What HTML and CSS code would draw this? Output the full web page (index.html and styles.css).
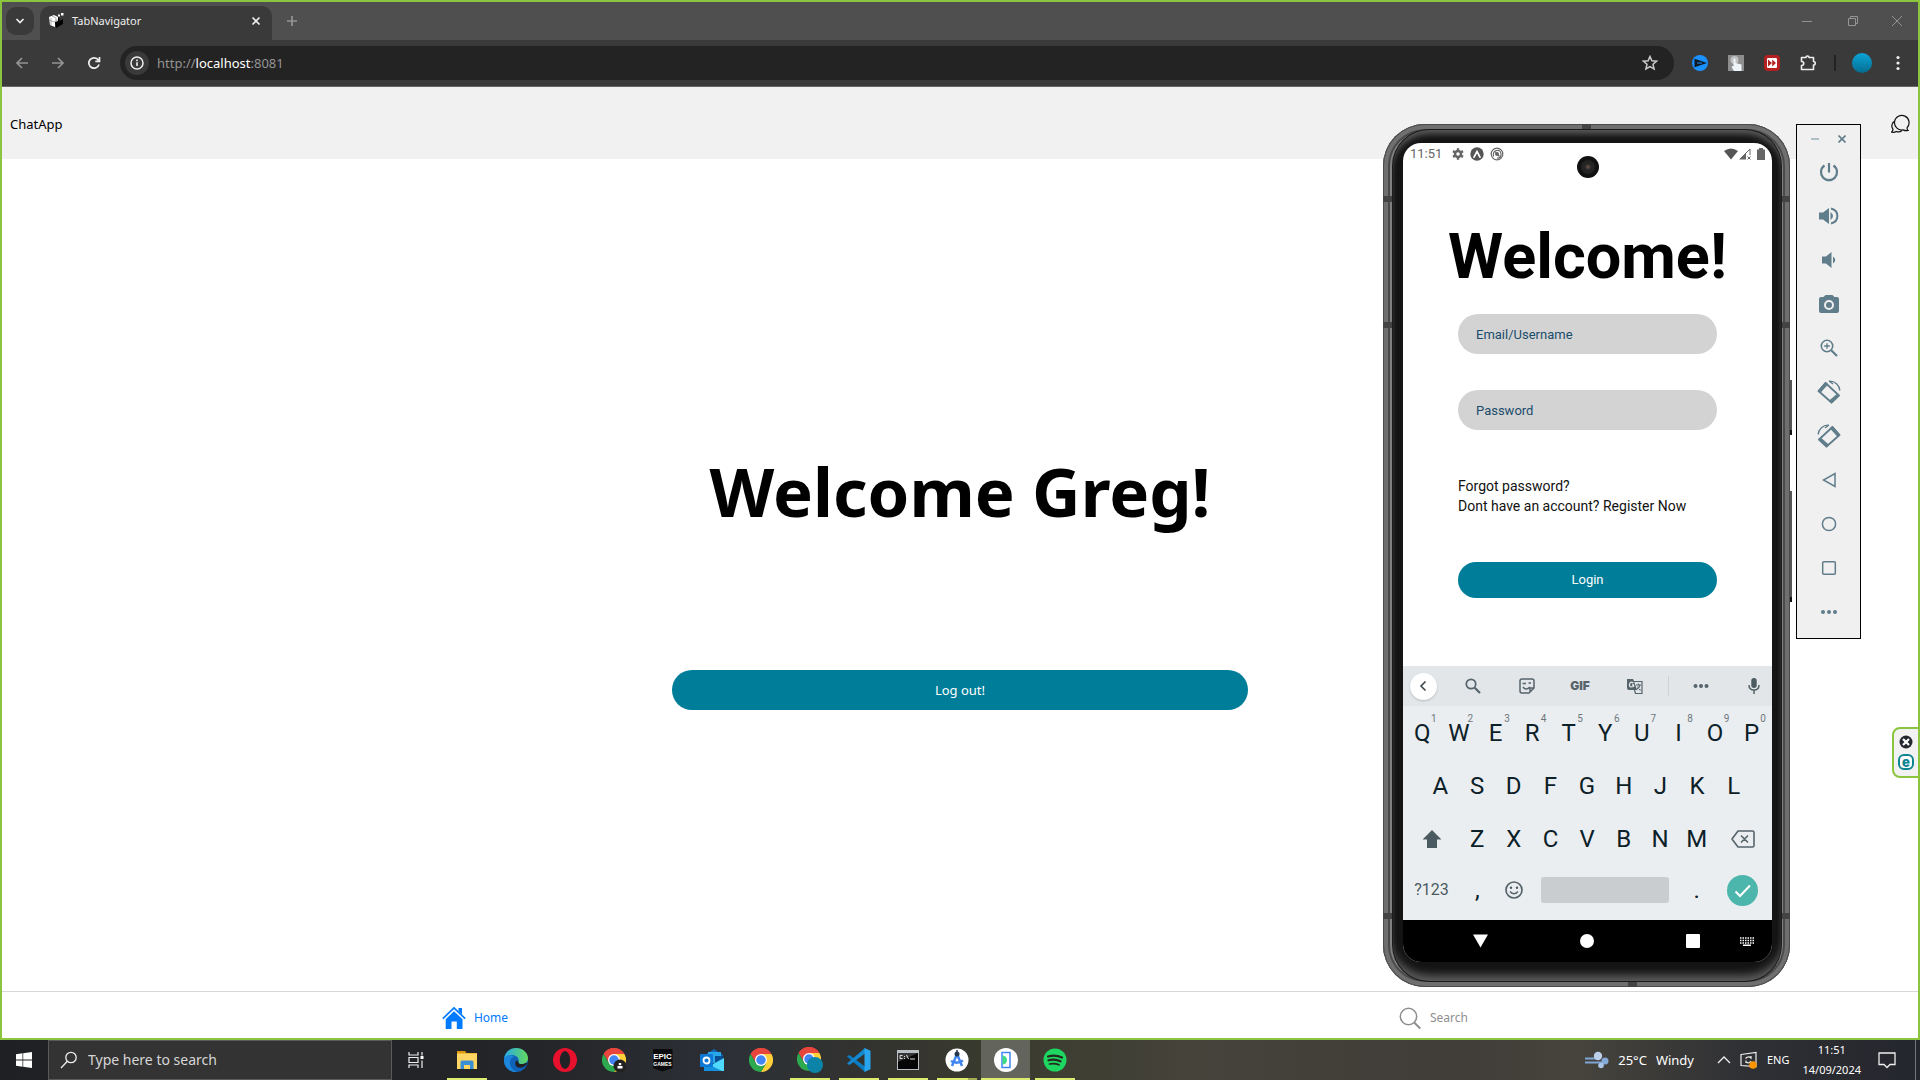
FILE: index.html
```html
<!DOCTYPE html>
<html lang="en">
<head>
<meta charset="utf-8">
<title>TabNavigator</title>
<link rel="stylesheet" href="styles.css">
</head>
<body>
<svg class="defs" aria-hidden="true">
  <symbol id="chrome" viewBox="0 0 48 48">
    <path fill="#e8453c" d="M24 24 3.200 12A24 24 0 0 1 44.800 12z"/>
    <path fill="#e8453c" d="M3.200 12A24 24 0 0 1 44.800 12H24L14 30z"/>
    <path fill="#fdd039" d="M44.800 12A24 24 0 0 1 24 48L34.400 30 24 12z"/>
    <path fill="#2da94f" d="M3.200 12A24 24 0 0 0 24 48L34.400 30H13.600z"/>
    <circle cx="24" cy="24" r="12" fill="#fff"/><circle cx="24" cy="24" r="9.500" fill="#4285f4"/>
  </symbol>
  <symbol id="rotate" viewBox="0 0 24 24">
    <path fill="none" stroke="currentColor" stroke-width="1.800" stroke-linejoin="round" d="M8.500 3 22 15.500 14.500 22.500 1.500 11z"/>
    <path fill="currentColor" d="m8.500 1.800 2.800 2.400L3.500 12.800.5 11zM20 13.700l3 1.800-8.500 8-2.800-2.500z"/>
    <path fill="none" stroke="currentColor" stroke-width="1.400" d="M12 1.200c6-.5 10.500 4 10.800 9.300M12 1l4 3"/>
  </symbol>
</svg>

<div class="browser">
  <header class="tabstrip">
    <button class="tab-search" aria-label="Search tabs"><svg width="12" height="12" viewBox="0 0 12 12"><path class="line w2" d="m2.500 4 3.500 3.500L9.500 4"/></svg></button>
    <div class="tab">
      <svg width="16" height="16" viewBox="0 0 16 16"><path fill="#fff" d="M1 4l5-2 4 2v5l-3 1v4l-5-2z"/><path fill="#000" d="m7 9 3-1V4l1.500 1.500V8L15 6v5l-7 4z"/><path fill="#fff" d="M10 1.500h2v2h-2zM13 0h2.500v2.500H13z"/><path stroke="#888" stroke-width=".7" fill="none" d="m1 7 5 2 4-2M4 3l4 2v4M3 5v7"/></svg>
      <span class="tab-title">TabNavigator</span>
      <button class="bare" aria-label="Close tab"><svg width="10" height="10" viewBox="0 0 10 10"><path class="line w2" d="m1.500 1.500 7 7m0-7-7 7"/></svg></button>
    </div>
    <button class="bare new-tab" aria-label="New tab"><svg width="12" height="12" viewBox="0 0 12 12"><path class="line dim w2" d="M6 1v10M1 6h10"/></svg></button>
    <div class="window-controls">
      <button class="bare" aria-label="Minimize"><svg width="12" height="12" viewBox="0 0 12 12"><path class="line dim" d="M1 6.500h10"/></svg></button>
      <button class="bare" aria-label="Restore"><svg width="12" height="12" viewBox="0 0 12 12"><path class="line dim" d="M1.500 3.500h7v7h-7zM3.500 3.500v-2h7v7h-2"/></svg></button>
      <button class="bare" aria-label="Close"><svg width="12" height="12" viewBox="0 0 12 12"><path class="line dim" d="m1 1 10 10m0-10L1 11"/></svg></button>
    </div>
  </header>

  <nav class="toolbar">
    <button class="bare tool" aria-label="Back"><svg width="14" height="14" viewBox="0 0 14 14"><path class="line dim w2" d="M13 7H2m5-5L2 7l5 5"/></svg></button>
    <button class="bare tool" aria-label="Forward"><svg width="14" height="14" viewBox="0 0 14 14"><path class="line dim w2" d="M1 7h11M7 2l5 5-5 5"/></svg></button>
    <button class="bare tool" aria-label="Reload"><svg width="14" height="14" viewBox="0 0 14 14"><path class="line w2" d="M12 8.500A5.200 5.200 0 1 1 10.800 3.400L12.300 5M12.500 1v4.300H8.300"/></svg></button>
    <div class="address">
      <button class="site-info" aria-label="Site information"><svg width="14" height="14" viewBox="0 0 14 14"><circle class="line" cx="7" cy="7" r="6" stroke-width="1.500"/><path stroke="#eee" stroke-width="1.600" d="M7 6.300V10M7 3.600v1.600"/></svg></button>
      <div class="url" role="textbox" aria-label="Address">http://<span class="host">localhost</span>:8081</div>
      <button class="bare" aria-label="Bookmark"><svg width="16" height="16" viewBox="0 0 16 16"><path class="line soft" stroke-width="1.500" d="m8 1.500 1.900 4.300 4.700.4-3.600 3.100 1.100 4.600L8 11.500l-4.100 2.400L5 9.300 1.400 6.200l4.700-.4z"/></svg></button>
    </div>
    <button class="bare tool" aria-label="Video extension"><svg width="16" height="16" viewBox="0 0 16 16"><circle cx="8" cy="8" r="8" fill="#1a91ff"/><path fill="#101820" d="m2.500 3.800 12.500 4.200-12.500 4.200z"/><path stroke="#1a91ff" d="M5 8h5"/></svg></button>
    <button class="bare tool" aria-label="Click extension"><svg width="16" height="16" viewBox="0 0 16 16"><path fill="#8e8e8e" d="M0 0h16v16H0z"/><circle cx="6.500" cy="5" r="4" fill="#c2c2c2"/><path fill="#eef6fb" d="M5.500 4q1-1 2 0v4l6 1.500V16H6l-2.500-4 1-1 1 .5z"/></svg></button>
    <button class="bare tool" aria-label="Speed extension"><svg width="16" height="16" viewBox="0 0 16 16"><rect width="16" height="16" rx="4" fill="#b3201f"/><rect x="3" y="3" width="10" height="10" rx="1" fill="#fff"/><path fill="#b3201f" d="m4 4.500 4 3.500-4 3.500zm4.200 0L12 8l-3.800 3.500z"/></svg></button>
    <button class="bare tool" aria-label="Extensions"><svg width="16" height="16" viewBox="0 0 16 16"><path class="line" stroke-width="1.600" stroke-linejoin="round" d="M1.500 2.500H6a1.500 1.500 0 0 1 3 0h4.500v4a1.500 1.500 0 0 1 0 3.500v4.500h-12v-4c3 0 3-4 0-4z"/></svg></button>
    <span class="tool-divider"></span>
    <button class="avatar" aria-label="Profile"></button>
    <button class="bare menu" aria-label="Menu"><svg width="4" height="16" viewBox="0 0 4 16" fill="#eee"><circle cx="2" cy="2.500" r="1.600"/><circle cx="2" cy="8" r="1.600"/><circle cx="2" cy="13.500" r="1.600"/></svg></button>
  </nav>

  <div class="app-header">
    <span>ChatApp</span>
    <button class="bare" aria-label="Chats"><svg width="20" height="20" viewBox="0 0 20 20"><path fill="none" stroke="#111" stroke-width="1.200" d="M17 13.800A7.300 7.300 0 1 0 13 15.900q2.500 1.200 5 .6-1-.9-1-2.700zM3.900 7.500c-2.300 2.300-2.600 5.300-.9 7.800 0 1.500-1.300 2.400-1.300 2.900 2 .3 3.500 0 4.500-.7 2 .8 4 .6 5.800-1"/></svg></button>
  </div>

  <main class="home">
    <h1>Welcome Greg!</h1>
    <button class="logout">Log out!</button>
  </main>

  <nav class="app-tabs">
    <a class="app-tab active" href="#home"><svg width="24" height="24" viewBox="0 0 24 24"><path fill="currentColor" d="m12 5.200 8.500 8V23H14.800v-7.500H9.500V23H3.700v-9.800z"/><path fill="none" stroke="currentColor" stroke-width="1.700" d="M.8 12.700 12 2l11.200 10.700"/><path fill="currentColor" d="M16.500 2H20v6.500l-3.500-3.400z"/></svg>Home</a>
    <a class="app-tab" href="#search"><svg width="24" height="24" viewBox="0 0 24 24"><circle cx="10.500" cy="10.500" r="8.200" fill="none" stroke="currentColor" stroke-width="1.500"/><path stroke="currentColor" stroke-width="2" d="m16.200 16.500 6 6"/></svg>Search</a>
  </nav>
</div>

<footer class="taskbar">
  <button class="bare start" aria-label="Start"><svg width="16" height="16" viewBox="0 0 16 16" fill="#fff"><path d="M0 2.200 6.500 1.300v6.300H0zM7.200 1.200 16 0v7.600H7.200zM0 8.400h6.500v6.300L0 13.800zM7.200 8.400H16V16l-8.800-1.200z"/></svg></button>
  <label class="task-search">
    <svg width="18" height="18" viewBox="0 0 18 18"><circle class="line" cx="11" cy="6.500" r="5.200" stroke-width="1.300"/><path class="line" stroke-width="1.300" d="M7.300 10.300 1 17"/></svg>
    <input type="text" placeholder="Type here to search">
  </label>
  <button class="bare start" aria-label="Task view"><svg width="16" height="16" viewBox="0 0 16 16"><path class="line" d="M1 0v3h9V0M1 16v-3h9v3M1 5.500h9v5H1zM14 0v3.500M14 8.500V16" stroke-width="1.200"/><path fill="#fff" d="M12.500 4h3v3h-3z"/></svg></button>
  <div class="apps">
    <button class="app running" aria-label="File Explorer"><svg width="24" height="24" viewBox="0 0 24 24"><path fill="#e09a10" d="M2 3h8l1.500 2H22v6H2z"/><path fill="#ffd664" d="M2 5.500h20V21H2z"/><path fill="#3b8fd4" d="M5.500 21v-7q0-1.500 1.500-1.500h10q1.500 0 1.500 1.500v7h-3.500v-4h-6v4z"/></svg></button>
    <button class="app" aria-label="Edge"><svg width="24" height="24" viewBox="0 0 24 24"><defs><linearGradient id="eg"><stop stop-color="#2aa8e8"/><stop offset="1" stop-color="#62d95c"/></linearGradient></defs><circle cx="12" cy="12" r="12" fill="#0f62b8"/><path fill="url(#eg)" d="M0 11C1 4 6 0 12 0c7 0 12 5 12 10 0 4-3 6-6 6s-4-1-3.500-2.500C15.500 10 12 7 8 7 4 7 1 9 0 11z"/><path fill="#1b86dc" d="M0 11c2-4 7-5 10-2.500-3 1-4.500 4-4 7.500.6 4 4 7 7.500 8C6 25-1 19 0 11z"/><path fill="#1f2125" d="M14.500 13.500c-1 2 2 3.500 6 2 2-.7 3-1 2.500 0-2 4-6 4.500-8.500 4-3.500-.7-4-5-2-7z"/></svg></button>
    <button class="app" aria-label="Opera"><svg width="24" height="24" viewBox="0 0 24 24"><circle cx="12" cy="12" r="12" fill="#e8112d"/><ellipse cx="12" cy="12" rx="5.200" ry="9" fill="#212226"/></svg></button>
    <button class="app" aria-label="Chrome guest"><svg width="24" height="24" viewBox="0 0 24 24"><use href="#chrome"/><circle cx="18" cy="18" r="6.500" fill="#222"/><path fill="#fff" d="M16.800 15h2.400v2.200h-2.400zM15.500 18h5v2.500h-5z"/></svg></button>
    <button class="app" aria-label="Epic Games"><span class="epic"><b>EPIC</b><i>GAMES</i></span></button>
    <button class="app" aria-label="Outlook"><svg width="24" height="24" viewBox="0 0 24 24"><path fill="#1066b5" d="M5 7 14 1l9 6v8H5z"/><path fill="#28a8ea" d="M8 4h13v11H8z"/><path fill="#0a4f94" d="M15 8h8v5l-8 4z"/><path fill="#50d9ff" d="M24 10v13H5l8-7z"/><path fill="#1490df" d="m4 14 18 9H4z"/><rect y="6" width="13" height="13" rx="1" fill="#0f78d4"/><circle cx="6.500" cy="12.500" r="3" fill="none" stroke="#fff" stroke-width="1.800"/></svg></button>
    <button class="app" aria-label="Chrome"><svg width="24" height="24"><use href="#chrome"/></svg></button>
    <button class="app running" aria-label="Chrome profile"><svg width="26" height="26" viewBox="0 0 26 26"><use href="#chrome" width="24" height="24"/><circle cx="18" cy="18" r="8" fill="#0b84a8"/></svg></button>
    <button class="app running" aria-label="Visual Studio Code"><svg width="24" height="24" viewBox="0 0 24 24"><path fill="#0b7cc4" d="M0 8.500 2.500 7 18 18.500V24z"/><path fill="#1489d0" d="M0 15.500 2.500 17 18 5.500V0z"/><path fill="#29a5ee" d="m17.500 0 6 2.800v18.400l-6 2.800z"/></svg></button>
    <button class="app running" aria-label="Command Prompt"><svg width="24" height="24" viewBox="0 0 24 24"><path fill="#b9bec4" d="M1 2h22v20H1z"/><path fill="#050505" d="M2 5h20v16H2z"/><path fill="#fff" opacity=".2" d="M2 5h20L2 14z"/><path stroke="#ddd" fill="none" d="M6.500 7.500H4v3h2.500M8.500 8v1m0 1v1M10.500 7l2 4M14 11h5"/></svg></button>
    <button class="app running multiple" aria-label="Android Studio"><svg width="24" height="24" viewBox="0 0 24 24"><circle cx="12" cy="12" r="11.500" fill="#fff"/><path fill="none" stroke="#3f86f0" stroke-width="2.500" d="m12 6-5 12M12 6l5 12M6 13q6 3.500 12-.5"/><circle cx="12" cy="6" r="2.500" fill="#26384e"/><path stroke="#26384e" stroke-width="1.500" d="M12 2v3"/></svg></button>
    <button class="app running current" aria-label="Android Emulator"><svg width="24" height="24" viewBox="0 0 24 24"><circle cx="12" cy="12" r="12" fill="#fff"/><path fill="none" stroke="#4285f4" stroke-width="1.500" d="M8 4.500h8v15H8z"/><path fill="#3ddc84" d="M8.500 7.500a4.500 4.500 0 0 1 0 9z"/></svg></button>
    <button class="app running" aria-label="Spotify"><svg width="24" height="24" viewBox="0 0 24 24"><circle cx="12" cy="12" r="11.500" fill="#1ed760"/><path fill="none" stroke="#242a20" stroke-linecap="round" stroke-width="2.200" d="M5 8.500q7.500-2 14 1M5.500 12.300q6.500-1.600 12 1"/><path fill="none" stroke="#242a20" stroke-linecap="round" stroke-width="1.700" d="M6.500 16q5-1.200 9.500.8"/></svg></button>
  </div>
  <div class="tray">
    <button class="bare weather"><svg width="24" height="18" viewBox="0 0 24 18"><path stroke="#7fa6d6" stroke-width="2" fill="none" d="M0 7.500h14M0 11.500h20"/><circle cx="13" cy="5" r="4.200" fill="#bcd0ea"/><circle cx="20" cy="10" r="3.500" fill="#86aad8"/><circle cx="16" cy="14.500" r="2.800" fill="#a9c4e6"/></svg><span>25°C</span><span>Windy</span></button>
    <button class="bare" aria-label="Show hidden icons"><svg width="14" height="14" viewBox="0 0 14 14"><path class="line" stroke-width="1.300" d="m1 10 6-6 6 6"/></svg></button>
    <button class="bare updates" aria-label="Updates"><svg width="18" height="18" viewBox="0 0 18 18"><path class="line" stroke-width="1.200" d="M1 3.500 16 1.500v14L1 14.500zM5.500 7.500q3-3 5.500-.5V5M6 12V9.500M6 11q3 2 5-1"/><circle cx="13" cy="14" r="3.800" fill="#ff9500"/></svg></button>
    <button class="bare lang">ENG</button>
    <button class="bare clock"><span>11:51</span><span>14/09/2024</span></button>
    <button class="bare" aria-label="Notifications"><svg width="18" height="18" viewBox="0 0 18 18"><path class="line" stroke-width="1.300" d="M1 2h16v11.500h-5l-3 3-3-3H1z"/></svg></button>
  </div>
</footer>

<section class="phone" aria-label="Phone emulator">
  <span class="side-key power"></span><span class="side-key volume"></span>
  <div class="bezel">
    <div class="screen">
      <span class="camera"></span>
      <div class="status">
        <span>11:51</span>
        <svg width="12" height="12" viewBox="0 0 12 12"><circle cx="6" cy="6" r="3" fill="none" stroke="#666" stroke-width="2.500"/><path stroke="#666" stroke-width="2.400" d="M6 .2v2M6 9.800v2M1 3.100l1.700 1M9.300 7.900l1.700 1M1 8.900l1.700-1M9.300 4.100l1.700-1"/></svg>
        <svg width="14" height="14" viewBox="0 0 14 14"><circle cx="7" cy="7" r="6.700" fill="#555"/><path fill="none" stroke="#fff" stroke-width="1.700" stroke-linecap="round" d="M4 10.200 7 4.500l3 5.700"/></svg>
        <svg width="14" height="14" viewBox="0 0 14 14"><circle cx="7" cy="7" r="5.800" fill="none" stroke="#666" stroke-width="1.200"/><path fill="none" stroke="#666" stroke-width="1.200" d="M3.500 9.500q-1-5 3-6t4.500 3.500-4 4M5.500 5l4 4.500"/><circle cx="7" cy="7" r="2" fill="#666"/></svg>
        <svg class="status-end" width="14" height="12" viewBox="0 0 14 12"><path fill="#555" d="M0 3q7-5 14 0L7 11.500z"/></svg>
        <svg width="12" height="12" viewBox="0 0 12 12"><path fill="#666" d="M0 11.500h7V5z"/><path fill="none" stroke="#666" d="M1 11 11 1v6M8.500 8.500l3 3m0-3-3 3"/></svg>
        <svg width="8" height="12" viewBox="0 0 8 12"><path fill="#666" d="M2 0h4v1.500h2V12H0V1.500h2z"/></svg>
      </div>
      <form class="login">
        <h2>Welcome!</h2>
        <input type="text" placeholder="Email/Username" aria-label="Email or username">
        <input type="password" placeholder="Password" aria-label="Password">
        <p><a href="#forgot">Forgot password?</a><a href="#register">Dont have an account? Register Now</a></p>
        <button type="button">Login</button>
      </form>
      <div class="keyboard">
        <div class="suggest">
          <button class="kb-back" aria-label="Back"><svg width="10" height="12" viewBox="0 0 10 12"><path fill="none" stroke="#3c474d" stroke-width="1.600" d="M7.500 1.500 3 6l4.500 4.500"/></svg></button>
          <svg width="16" height="16" viewBox="0 0 16 16"><circle class="ink" cx="6" cy="6" r="4.700" stroke-width="1.700"/><path class="ink" stroke-width="2.200" d="m9.700 9.700 5.300 5.300"/></svg>
          <svg width="16" height="16" viewBox="0 0 16 16"><path class="ink" stroke-width="1.500" d="M3 1h10q2 0 2 2v7l-5 5H3q-2 0-2-2V3q0-2 2-2zM15 10h-4v4.500M4 9q3 4 7 0"/><path class="ink" stroke-width="1.700" d="M3.500 5.500H7M9.500 5H12"/></svg>
          <span class="gif">GIF</span>
          <svg width="16" height="16" viewBox="0 0 16 16"><path fill="#56646b" d="M0 1h6l1 2 3 9H2q-2 0-2-2z"/><path class="ink" stroke-width="1.200" d="M7 3.500h8v12H8.500L7.500 12M9 7h5M11.500 5.500V7M13 7q-.5 3-3.500 4.500M10.500 8.500l3 4"/><path fill="none" stroke="#e2e6e9" stroke-width="1.300" d="M6.500 5Q3 3 2.500 6.500t4 2V7H5"/></svg>
          <span class="kb-sep"></span>
          <svg width="16" height="6" viewBox="0 0 16 6" fill="#56646b"><circle cx="2.500" cy="3" r="2"/><circle cx="8" cy="3" r="2"/><circle cx="13.500" cy="3" r="2"/></svg>
          <svg class="mic" width="12" height="16" viewBox="0 0 12 16"><rect x="3.300" width="5.400" height="10" rx="2.700" fill="#4c5a61"/><path class="ink" stroke-width="1.500" d="M1 7q0 5 5 5t5-5M6 12v4"/></svg>
        </div>
        <div class="keys">
          <button>Q<sup>1</sup></button><button>W<sup>2</sup></button><button>E<sup>3</sup></button><button>R<sup>4</sup></button><button>T<sup>5</sup></button><button>Y<sup>6</sup></button><button>U<sup>7</sup></button><button>I<sup>8</sup></button><button>O<sup>9</sup></button><button>P<sup>0</sup></button>
        </div>
        <div class="keys inset">
          <button>A</button><button>S</button><button>D</button><button>F</button><button>G</button><button>H</button><button>J</button><button>K</button><button>L</button>
        </div>
        <div class="keys">
          <button class="wide" aria-label="Shift"><svg width="20" height="18" viewBox="0 0 20 18"><path fill="#4c5a61" d="m10 0 9.500 9.500H15V18H5V9.500H.5z"/></svg></button><button>Z</button><button>X</button><button>C</button><button>V</button><button>B</button><button>N</button><button>M</button><button class="wide" aria-label="Backspace"><svg width="24" height="18" viewBox="0 0 24 18"><path class="ink" stroke-width="1.600" stroke-linejoin="round" d="M7 1h14.500q1.500 0 1.500 1.500v13q0 1.500-1.500 1.500H7L1 9zM10 5.500l7 7m0-7-7 7"/></svg></button>
        </div>
        <div class="keys last">
          <button class="wide symbols">?123</button><button>,</button><button aria-label="Emoji"><svg width="18" height="18" viewBox="0 0 18 18"><circle class="ink" cx="9" cy="9" r="8" stroke-width="1.700"/><path class="ink" stroke-width="1.500" d="M5 10.500q4 4.500 8 0"/><circle cx="6" cy="6.800" r="1.200" fill="#4c5a61"/><circle cx="12" cy="6.800" r="1.200" fill="#4c5a61"/></svg></button><button class="space" aria-label="Space"></button><button>.</button><button class="wide" aria-label="Done"><svg width="31" height="31" viewBox="0 0 31 31"><circle cx="15.500" cy="15.500" r="15.500" fill="#4db6ac"/><path fill="none" stroke="#fff" stroke-width="2" d="m8.500 16.500 4.500 4.500 10-10.500"/></svg></button>
        </div>
      </div>
      <div class="phone-nav">
        <div class="nav-keys">
          <svg width="15" height="14" viewBox="0 0 15 14"><path fill="#fff" d="M0 .5h15L7.500 13.500z"/></svg>
          <svg width="14" height="14" viewBox="0 0 14 14"><circle cx="7" cy="7" r="7" fill="#fff"/></svg>
          <svg width="14" height="14" viewBox="0 0 14 14"><rect width="14" height="14" rx="1" fill="#fff"/></svg>
        </div>
        <svg width="14" height="9" viewBox="0 0 14 9"><path stroke="#fff" stroke-width="1.500" stroke-dasharray="1.500 1" d="M0 1h14M0 3.500h14M0 6h14"/><path stroke="#fff" stroke-width="1.500" d="M3 8.200h8"/></svg>
      </div>
    </div>
  </div>
</section>

<aside class="emulator-tools" aria-label="Emulator controls">
  <div class="emulator-window">
    <button class="bare" aria-label="Minimize"><svg width="8" height="8" viewBox="0 0 8 8"><path stroke="#9db0ba" stroke-width="1.500" d="M0 4h8"/></svg></button>
    <button class="bare" aria-label="Close"><svg width="8" height="8" viewBox="0 0 8 8"><path class="tint" stroke-width="1.600" d="m.5.5 7 7m0-7-7 7"/></svg></button>
  </div>
  <button class="bare" aria-label="Power"><svg width="20" height="20" viewBox="0 0 20 20"><path class="tint" stroke-width="2.200" d="M5.500 3.500a8 8 0 1 0 9 0M10 1v9.500"/></svg></button>
  <button class="bare" aria-label="Volume up"><svg width="20" height="18" viewBox="0 0 20 18"><path fill="currentColor" d="M0 5.500h4L10 1v16l-6-4.500H0zM11.500 5q5 4 0 8z"/><path class="tint" stroke-width="2" d="M12 1.500c8.500 2 8.500 13 0 15"/></svg></button>
  <button class="bare" aria-label="Volume down"><svg width="16" height="16" viewBox="0 0 16 16"><path fill="currentColor" d="M1 4.500h4L10.500 0v16L5 11.500H1zM12 4.500q4.500 3.500 0 7z"/></svg></button>
  <button class="bare" aria-label="Screenshot"><svg width="20" height="18" viewBox="0 0 20 18"><path fill="currentColor" d="M6.500 0h7l2 2H18q2 0 2 2v12q0 2-2 2H2q-2 0-2-2V4q0-2 2-2h2.500z"/><circle cx="10" cy="10" r="4" fill="none" stroke="#f0f0f0" stroke-width="2"/></svg></button>
  <button class="bare" aria-label="Zoom"><svg width="18" height="18" viewBox="0 0 18 18"><circle class="tint" cx="7" cy="7" r="5.700" stroke-width="1.600"/><path class="tint" stroke-width="1.300" d="M7 4.200v5.600M4.200 7h5.600"/><path class="tint" stroke-width="2.200" d="m11 11 6 6"/></svg></button>
  <button class="bare" aria-label="Rotate left"><svg width="24" height="24"><use href="#rotate"/></svg></button>
  <button class="bare" aria-label="Rotate right"><svg class="flip" width="24" height="24"><use href="#rotate"/></svg></button>
  <button class="bare" aria-label="Back"><svg width="16" height="16" viewBox="0 0 16 16"><path class="tint" stroke-width="1.500" d="M14 1.500v13L2.500 8z"/></svg></button>
  <button class="bare" aria-label="Home"><svg width="16" height="16" viewBox="0 0 16 16"><circle class="tint" cx="8" cy="8" r="6.600" stroke-width="1.500"/></svg></button>
  <button class="bare" aria-label="Overview"><svg width="16" height="16" viewBox="0 0 16 16"><rect class="tint" x="1.700" y="1.700" width="12.600" height="12.600" rx="1" stroke-width="1.500"/></svg></button>
  <button class="bare" aria-label="More"><svg width="16" height="6" viewBox="0 0 16 6" fill="currentColor"><circle cx="2" cy="3" r="2"/><circle cx="8" cy="3" r="2"/><circle cx="14" cy="3" r="2"/></svg></button>
</aside>

<aside class="side-widget">
  <button class="bare" aria-label="Dismiss"><svg width="14" height="14" viewBox="0 0 14 14"><circle cx="7" cy="7" r="6.500" fill="#23272f"/><path stroke="#fff" stroke-width="2.200" d="m4 4 6 6m0-6-6 6"/></svg></button>
  <button class="bare widget-e" aria-label="Open">e</button>
</aside>
</body>
</html>
```
FILE: styles.css
```css
* { box-sizing: border-box; }

body {
  margin: 0;
  min-height: 100vh;
  display: flex;
  flex-direction: column;
  position: relative;
  overflow-x: hidden;
  background: #fff;
  color: #000;
  font: 13px/20px "Noto Sans", "Open Sans", sans-serif;
}

button, input { font: inherit; color: inherit; margin: 0; }
button { border: 0; cursor: pointer; }
svg { display: block; flex: none; }
a { color: inherit; text-decoration: none; }

.defs { position: absolute; width: 0; height: 0; }
.bare { display: flex; align-items: center; justify-content: center; padding: 0; background: none; }
.line { fill: none; stroke: #eee; }
.line.w2 { stroke-width: 1.7; }
.line.dim { stroke: #949494; }
.line.soft { stroke: #ccc; }

/* browser window */
.browser {
  flex: 1;
  display: flex;
  flex-direction: column;
  border: 2px solid #8bc53f;
}

.tabstrip {
  display: flex;
  align-items: center;
  height: 38px;
  padding-left: 4px;
  background: #4f4f4f;
}
.tab-search {
  display: flex;
  align-items: center;
  justify-content: center;
  width: 28px;
  height: 28px;
  padding: 0;
  margin-right: 6px;
  border-radius: 10px;
  background: #3a3a3a;
}
.tab {
  align-self: flex-end;
  display: flex;
  align-items: center;
  gap: 8px;
  width: 232px;
  height: 34px;
  padding: 0 11px 5px 8px;
  border-radius: 10px 10px 0 0;
  background: #3a3a3a;
  color: #eee;
  font-size: 11px;
}
.tab-title { flex: 1; }
.new-tab { width: 40px; height: 28px; }
.window-controls { display: flex; margin-left: auto; }
.window-controls button { width: 46px; height: 36px; }
.window-controls button:last-child { width: 42px; }

.toolbar {
  display: flex;
  align-items: center;
  height: 47px;
  padding: 0 12px 0 2px;
  border-bottom: 1px solid #666;
  background: #3a3a3a;
}
.tool { width: 36px; height: 34px; }
.address {
  flex: 1;
  display: flex;
  align-items: center;
  height: 34px;
  margin: 0 8px;
  padding: 0 16px 0 5px;
  border-radius: 17px;
  background: #232323;
}
.site-info {
  display: flex;
  align-items: center;
  justify-content: center;
  width: 24px;
  height: 24px;
  padding: 0;
  border-radius: 50%;
  background: #3a3a3a;
}
.url { flex: 1; padding-left: 8px; color: #949494; }
.host { color: #fff; }
.tool-divider { width: 2px; height: 16px; margin: 0 16px 0 8px; background: #232323; }
.avatar { width: 20px; height: 20px; padding: 0; border-radius: 50%; background: linear-gradient(#0ba5d8, #066d91); }
.menu { width: 16px; height: 34px; margin-left: 18px; }

/* web page */
.app-header {
  display: flex;
  align-items: center;
  justify-content: space-between;
  height: 72px;
  padding: 2px 8px 0;
  background: #f1f1f1;
}
.home {
  flex: 1;
  display: flex;
  flex-direction: column;
  align-items: center;
  justify-content: center;
  gap: 132px;
  padding-top: 4px;
}
.home h1 { margin: 0; font-size: 67px; line-height: 94px; font-weight: 700; }
.logout {
  width: 30vw;
  height: 40px;
  border-radius: 20px;
  background: #007d99;
  color: #fff;
}
.app-tabs { display: flex; height: 47px; border-top: 1px solid #d8d8d8; }
.app-tab {
  flex: 1;
  display: flex;
  align-items: center;
  justify-content: center;
  gap: 8px;
  padding: 5px 12px 0 0;
  color: #8e8e8f;
  font-size: 12px;
}
.app-tab.active { color: #007aff; }

/* taskbar */
.taskbar {
  display: flex;
  height: 40px;
  background: linear-gradient(90deg, #1f2024, #242528 28%, #2c3036 38%, #33332f 46%, #3a3b2e 52%, #45433a 62%, #413d39 76%, #46443c 82%, #2f3034 91%, #24262d);
}
.start { width: 48px; }
.task-search {
  display: flex;
  align-items: center;
  gap: 10px;
  width: 344px;
  padding: 0 11px;
  border: 1px solid #5a5a5a;
  background: #333;
}
.task-search input {
  flex: 1;
  min-width: 0;
  padding: 0;
  border: 0;
  background: none;
  font-size: 14px;
}
.task-search input::placeholder { color: #d6d6d6; opacity: 1; }
.apps { display: flex; padding-left: 2px; }
.app {
  display: flex;
  align-items: center;
  justify-content: center;
  width: 49px;
  padding: 0;
  background: none;
}
.app.running {
  background: linear-gradient(#dbec6e, #dbec6e) center bottom / 40px 2px no-repeat;
}
.app.multiple {
  background: linear-gradient(90deg, #dbec6e 31px, #a3ae52 31px) center bottom / 40px 2px no-repeat;
}
.app.current { background: linear-gradient(#dbec6e, #dbec6e) center bottom / 100% 2px no-repeat #63645b; }
.epic {
  display: flex;
  flex-direction: column;
  align-items: center;
  width: 20px;
  height: 23px;
  padding-top: 2px;
  background: #0b0b0b;
  clip-path: polygon(0 0, 100% 0, 100% 85%, 50% 100%, 0 85%);
  color: #fff;
  font: 700 8px/11px "Liberation Sans", sans-serif;
}
.epic i { font: 700 5px/5px "Liberation Sans", sans-serif; }
.tray {
  display: flex;
  align-items: stretch;
  margin-left: auto;
  margin-right: 4px;
  padding-right: 19px;
  border-right: 1px solid #777;
  color: #fff;
}
.weather { gap: 9px; margin-right: 23px; }
.updates { margin-left: 9px; }
.lang { margin: 0 13px 0 9px; font-size: 11px; }
.clock { flex-direction: column; margin-right: 17px; font-size: 11px; }

/* phone window floating over the desktop */
.phone {
  position: absolute;
  top: 124px;
  right: 130px;
  width: 407px;
  padding: 6px 9px 6px 10px;
  border-radius: 42px;
  background: #808080;
  box-shadow: inset 0 0 0 1px #4c4c4c, inset 0 0 0 5px #6f6f6f, inset 0 0 0 7px #4a4a4a;
}
/* antenna bands set into the metal frame */
.phone::before {
  content: "";
  position: absolute;
  inset: 0;
  border-radius: inherit;
  background:
    linear-gradient(#444, #444) 199px 0 / 9px 5px no-repeat,
    linear-gradient(#444, #444) 245px 100% / 9px 5px no-repeat,
    linear-gradient(#444, #444) 0 72px / 100% 6px no-repeat,
    linear-gradient(#444, #444) 0 198px / 100% 6px no-repeat,
    linear-gradient(#444, #444) 0 789px / 100% 6px no-repeat;
}
.side-key { position: absolute; right: -2px; width: 2px; background: #555; border-bottom: 5px solid #111; }
.side-key.power { top: 256px; height: 55px; }
.side-key.volume { top: 367px; height: 111px; }
.bezel {
  position: relative;
  padding: 13px 9px 19px 10px;
  border-radius: 36px;
  background: #141414;
  box-shadow: 0 0 0 1px #1c1c1c, inset 0 7px 6px -3px #5c5c5c, inset 0 -10px 8px -4px #5c5c5c;
}
.screen {
  position: relative;
  display: flex;
  flex-direction: column;
  overflow: hidden;
  border-radius: 18px;
  background: #fff;
  font-family: Roboto, sans-serif;
}
.camera {
  position: absolute;
  top: 13px;
  left: 50%;
  width: 22px;
  height: 22px;
  margin-left: -11px;
  border-radius: 50%;
  background: radial-gradient(circle, #5a4a40 1px, #262626 3px, #222 6px, #101010 8px);
}
.status {
  display: flex;
  align-items: center;
  gap: 6px;
  height: 22px;
  padding: 0 7px;
  color: #666;
}
.status span { margin-right: 4px; }
.status-end { margin-left: auto; }
.status-end ~ svg { margin-left: -5px; }
.status-end ~ svg:last-child { margin-left: 0; }

.login { display: flex; flex-direction: column; height: 501px; padding: 54px 55px 0; }
.login h2 { margin: 0 -20px 19px; text-align: center; font-size: 63px; line-height: 76px; font-weight: 700; }
.login input {
  height: 40px;
  margin-bottom: 36px;
  padding: 0 18px;
  border: 0;
  border-radius: 20px;
  background: #d3d3d3;
}
.login input::placeholder { color: #1b4c6b; opacity: 1; }
.login p { display: flex; flex-direction: column; margin: 10px 0 46px; font-size: 14px; color: #111; }
.login button { height: 36px; border-radius: 18px; background: #007d99; color: #fff; }

.keyboard { height: 254px; background: #ebeef1; color: #0c2028; }
.ink { fill: none; stroke: #56646b; }
.suggest {
  display: grid;
  grid-template-columns: 40px 60px 48px 58px 52px 14px 52px 1fr;
  align-items: center;
  justify-items: center;
  height: 40px;
  background: #e2e6e9;
}
.kb-back {
  display: flex;
  align-items: center;
  justify-content: center;
  width: 27px;
  height: 27px;
  padding: 0;
  border-radius: 50%;
  background: #fff;
  box-shadow: 0 1px 2px #b5babd;
}
.gif { color: #56646b; font: 900 12px/20px Inter, sans-serif; }
.kb-sep { width: 1px; height: 20px; background: #cdd2d5; }
.mic { justify-self: end; margin-right: 12px; }
.keys { display: flex; height: 53px; padding: 0 2px 0 1px; }
.keys.inset { padding: 0 20px 0 19px; }
.keys button {
  flex: 1;
  display: flex;
  align-items: center;
  justify-content: center;
  position: relative;
  min-width: 0;
  padding: 0;
  background: none;
  font-size: 24px;
  line-height: 28px;
}
.keys sup {
  position: absolute;
  top: 7px;
  right: 4px;
  color: #6c777c;
  font-size: 10px;
  line-height: 12px;
}
.keys .wide { flex: none; width: 55px; }
.keys .symbols { color: #4c5a61; font-size: 16px; }
.keys.last { height: 50px; }
.keys .space { flex: 3.5; height: 26px; margin: 12px 9px 0; border-radius: 3px; background: #c9cdd0; }

.phone-nav {
  display: flex;
  align-items: center;
  gap: 40px;
  height: 42px;
  padding-left: 70px;
  background: #000;
}
.nav-keys { display: flex; gap: 92px; }

/* emulator tool column */
.emulator-tools {
  position: absolute;
  top: 124px;
  right: 59px;
  display: grid;
  grid-template-rows: 25px repeat(11, 44px);
  width: 65px;
  padding-bottom: 4px;
  border: 1px solid #000;
  background: #f0f0f0;
  color: #607d8b;
}
.tint { fill: none; stroke: #607d8b; }
.flip { transform: scaleX(-1); }
.emulator-window { display: flex; justify-content: center; gap: 19px; padding-top: 3px; }

.side-widget {
  position: absolute;
  top: 727px;
  right: 0;
  display: flex;
  flex-direction: column;
  align-items: center;
  gap: 5px;
  width: 28px;
  padding: 6px 0;
  border: 2px solid #8bc53f;
  border-radius: 8px 0 0 8px;
  background: #f2f2f2;
}
.widget-e {
  width: 16px;
  height: 16px;
  border: 2px solid #0f8492;
  border-radius: 6px;
  background: #fff;
  color: #0f8492;
  font: 900 13px/12px Inter, sans-serif;
}
```
